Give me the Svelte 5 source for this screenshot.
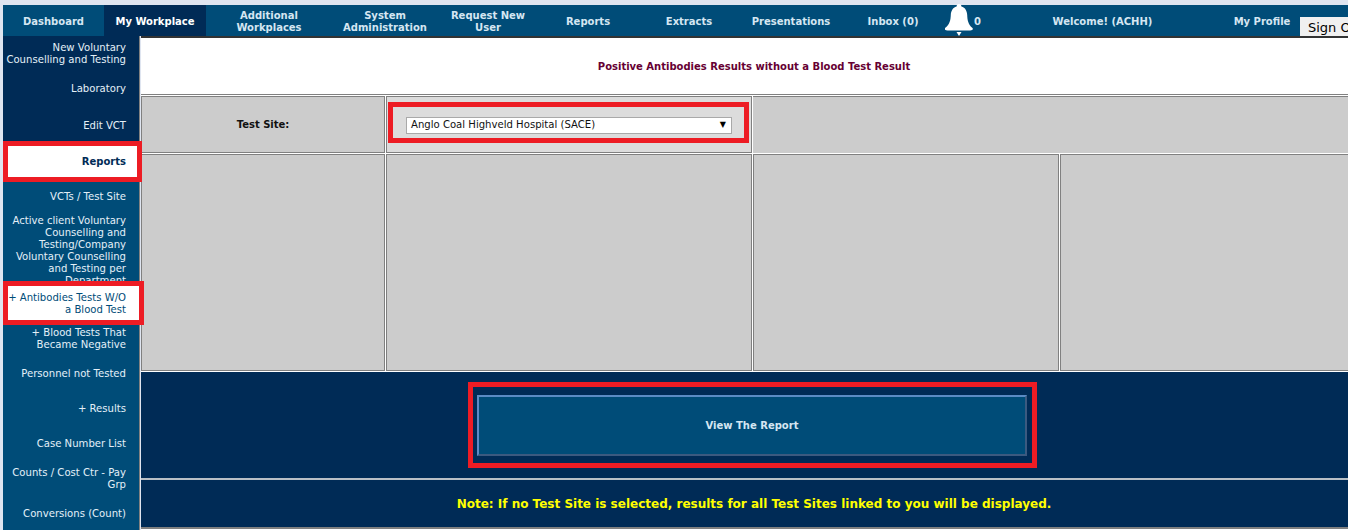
<script>
	const navItems = [
		{ label: 'Dashboard', width: 101 },
		{ label: 'My Workplace', width: 102, active: true },
		{ label: 'Additional Workplaces', width: 126 },
		{ label: 'System Administration', width: 106 },
		{ label: 'Request New User', width: 100 },
		{ label: 'Reports', width: 100 },
		{ label: 'Extracts', width: 102 },
		{ label: 'Presentations', width: 102 },
		{ label: 'Inbox (0)', width: 102 }
	];

	const sideTop = ['New Voluntary Counselling and Testing', 'Laboratory', 'Edit VCT'];
	const sideBottom = [
		'+ Blood Tests That Became Negative',
		'Personnel not Tested',
		'+ Results',
		'Case Number List',
		'Counts / Cost Ctr - Pay Grp',
		'Conversions (Count)'
	];
</script>

<div class="page">
	<nav class="topnav">
		{#each navItems as item}
			<a class="nav-item" class:active={item.active} style="width: {item.width}px">{item.label}</a>
		{/each}
		<div class="bell">
			<svg width="28" height="32" viewBox="0 0 28 32">
				<path
					fill="#fff"
					d="M14 0c1.5 0 2.4 1 2.4 2.4 4 1 5.6 4.6 5.8 8.6.2 5 1 9.600 5.300 13 .4.400.5 1.200 0 1.700-.6.500-1.500.700-2.500.800H2.500c-1 0-1.900-.300-2.500-.800-.5-.500-.4-1.300 0-1.700C4.800 20.600 5.600 16 5.800 11c.2-4 1.800-7.600 5.800-8.600C11.600 1 12.500 0 14 0z"
				/>
				<path fill="#fff" d="M11.500 28h5l-2.500 4z" />
			</svg>
			<span>0</span>
		</div>
		<span class="nav-item welcome">Welcome! (ACHH)</span>
		<a class="nav-item profile">My Profile</a>
		<button class="signout">Sign Out</button>
	</nav>

	<div class="body-row">
		<aside class="sidebar">
			{#each sideTop as label}
				<a class="side-item dark">{label}</a>
			{/each}
			<a class="side-item current">Reports</a>
			<a class="side-item short">VCTs / Test Site</a>
			<a class="side-item clipped">
				Active client Voluntary Counselling and Testing/Company Voluntary Counselling and Testing per Department
			</a>
			<a class="side-item current-sub">+ Antibodies Tests W/O a Blood Test</a>
			{#each sideBottom as label}
				<a class="side-item">{label}</a>
			{/each}
		</aside>

		<main class="content">
			<h1 class="title">Positive Antibodies Results without a Blood Test Result</h1>
			<div class="filters">
				<div class="cell label">Test Site:</div>
				<div class="cell site">
					<div class="select">
						<span>Anglo Coal Highveld Hospital (SACE)</span>
						<span class="arrow">▼</span>
					</div>
				</div>
				<div class="cell blank-wide"></div>
				<div class="cell tall"></div>
				<div class="cell tall"></div>
				<div class="cell tall"></div>
				<div class="cell tall"></div>
			</div>
			<div class="action">
				<button class="view">View The Report</button>
			</div>
			<div class="note">Note: If no Test Site is selected, results for all Test Sites linked to you will be displayed.</div>
		</main>
	</div>

	<div class="mark mark-reports"></div>
	<div class="mark mark-antibodies"></div>
	<div class="mark mark-site"></div>
	<div class="mark mark-view"></div>
</div>

<style>
	:global(body) {
		margin: 0;
		overflow: hidden;
		background: #fff;
	}
	.page {
		position: relative;
		width: 1348px;
		height: 530px;
		overflow: hidden;
		background: #dfe5f0;
		padding: 5px 0 0 3px;
		box-sizing: border-box;
		font-family: 'DejaVu Sans', Verdana, sans-serif;
		font-size: 10px;
		line-height: 12px;
	}
	.topnav {
		display: flex;
		align-items: stretch;
		width: 1345px;
		height: 31px;
		background: #004c78;
		position: relative;
	}
	.nav-item {
		display: flex;
		align-items: center;
		justify-content: center;
		flex: none;
		text-align: center;
		font-weight: bold;
		color: #d5e6f2;
		padding: 2px 10px 0;
		box-sizing: border-box;
	}
	.nav-item.active {
		background: #002b56;
		color: #fff;
	}
	.bell {
		display: flex;
		align-items: center;
		gap: 1px;
		width: 42px;
		flex: none;
		margin-left: 1px;
		color: #d5e6f2;
		font-weight: bold;
	}
	.bell span {
		padding-top: 2px;
	}
	.bell svg {
		margin-top: -1px;
	}
	.welcome {
		width: 231px;
	}
	.profile {
		width: 88px;
		padding: 2px 0 0;
	}
	.signout {
		position: absolute;
		left: 1297px;
		top: 12px;
		width: 70px;
		height: 19px;
		padding: 1px 0 0 8px;
		border: none;
		background: #f0f0f0;
		color: #000;
		font: 13px 'DejaVu Sans', sans-serif;
		text-align: left;
	}
	.body-row {
		display: flex;
		height: 494px;
	}
	.sidebar {
		width: 136px;
		flex: none;
		background: #004c78;
		display: flex;
		flex-direction: column;
		border-right: 1px solid #808080;
	}
	.side-item {
		display: flex;
		align-items: center;
		justify-content: flex-end;
		height: 35px;
		flex: none;
		text-align: right;
		color: #e4f0f8;
		padding: 4px 13px 0 3px;
		box-sizing: border-box;
		font-size: 10.1px;
		overflow: hidden;
	}
	.side-item.dark {
		background: #002b56;
		height: 35.5px;
		padding-top: 2px;
	}
	.side-item.dark:nth-child(3) {
		height: 37px;
		padding-top: 4px;
	}
	.side-item.dark:first-child {
		height: 34px;
	}
	.side-item.current {
		background: #fff;
		color: #002b56;
		font-weight: bold;
		font-size: 10px;
		height: 37px;
		padding-top: 2px;
	}
	.side-item.short {
		height: 32px;
		padding-top: 2px;
	}
	.side-item.clipped {
		align-items: flex-start;
		height: 73px;
		padding-top: 3px;
	}
	.side-item.current-sub {
		background: #fff;
		color: #004c78;
		padding-left: 5px;
		height: 35px;
	}
	.content {
		width: 1226px;
		flex: none;
		background: #fff;
		border-top: 2px solid #333;
		margin-left: 1px;
	}
	.title {
		height: 57px;
		margin: 0;
		padding-top: 1px;
		display: flex;
		align-items: center;
		justify-content: center;
		color: #660033;
		font-size: 10px;
		font-weight: bold;
		border-bottom: 1px solid #808080;
		box-sizing: border-box;
	}
	.filters {
		display: grid;
		grid-template-columns: 245px 367px 307px 1fr;
		grid-template-rows: 58px 218px;
		gap: 0;
		margin-top: 1px;
	}
	.cell {
		background: #ccc;
		border: 1px solid #808080;
		box-sizing: border-box;
		margin-right: 1px;
		margin-bottom: 1px;
	}
	.label {
		display: flex;
		align-items: center;
		justify-content: center;
		font-weight: bold;
		color: #111;
		padding-top: 1px;
	}
	.site {
		background: #dcdcdc;
		display: flex;
		align-items: center;
		padding-left: 19px;
	}
	.blank-wide {
		grid-column: 3 / 5;
		border: none;
		border-top: 1px solid #808080;
		margin-right: 0;
	}
	.select {
		display: flex;
		align-items: center;
		justify-content: space-between;
		width: 326px;
		height: 17px;
		background: #fff;
		border: 1px solid #a9a9a9;
		box-sizing: border-box;
		padding: 0 4px;
		color: #111;
		font-size: 10.1px;
		margin-top: 1px;
	}
	.arrow {
		font-size: 8px;
		color: #000;
		margin-right: 1px;
	}
	.action {
		height: 108px;
		background: #002b56;
		display: flex;
		align-items: center;
		justify-content: center;
		padding-right: 4px;
		box-sizing: border-box;
		border-bottom: 2px solid #b9c0c6;
	}
	.view {
		width: 550px;
		height: 61px;
		background: #004c78;
		color: #d5e6f2;
		font: bold 10px 'DejaVu Sans', sans-serif;
		border: 2px solid;
		border-color: #5b8bc4 #3b5a80 #3b5a80 #5b8bc4;
		padding: 0;
	}
	.note {
		height: 49px;
		background: #002b56;
		color: #ffff00;
		font-size: 12px;
		font-weight: bold;
		display: flex;
		align-items: center;
		justify-content: center;
		box-sizing: border-box;
		border-bottom: 2px solid #808080;
	}
	.mark {
		position: absolute;
		border: 5px solid #ed1c24;
		box-sizing: border-box;
		pointer-events: none;
	}
	.mark-reports {
		left: 3px;
		top: 141px;
		width: 139px;
		height: 41px;
	}
	.mark-antibodies {
		left: 3px;
		top: 281px;
		width: 141px;
		height: 44px;
	}
	.mark-site {
		left: 388px;
		top: 102px;
		width: 361px;
		height: 41px;
	}
	.mark-view {
		left: 468px;
		top: 382px;
		width: 569px;
		height: 86px;
	}
</style>
